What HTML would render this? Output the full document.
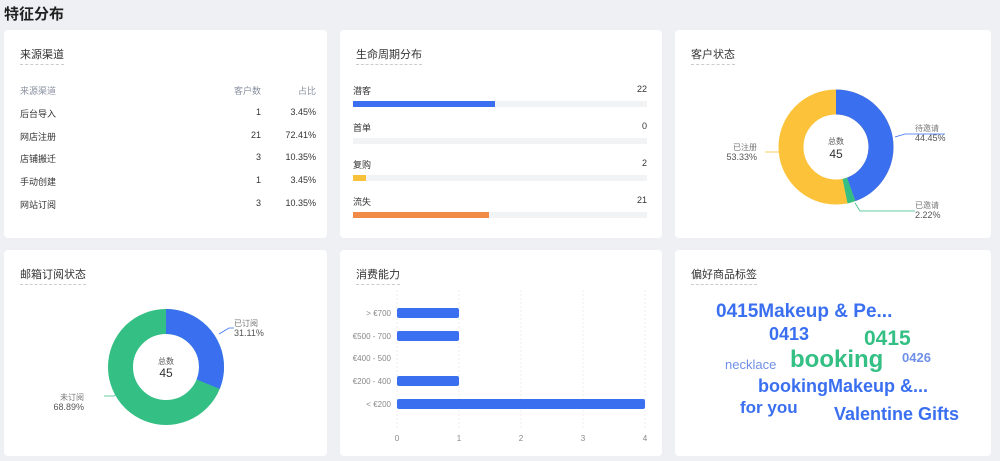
<!DOCTYPE html>
<html><head><meta charset="utf-8"><style>
body{margin:0;width:1000px;height:461px;background:#eef0f4;font-family:"Liberation Sans","Noto Sans CJK SC",sans-serif;position:relative;overflow:hidden;color:#333}
.h{position:absolute;left:4px;top:3px;font-size:15px;font-weight:bold;color:#222}
.c{position:absolute;background:#fff;border-radius:4px}
.t{position:absolute;left:16px;top:16px;font-size:11px;color:#333;border-bottom:1px dashed #ccc;padding-bottom:2px}
.a{position:absolute;font-size:9px;color:#333}
.g{color:#8a90a0}
.r{text-align:right}
</style></head><body>
<div class="h">特征分布</div>

<div class="c" style="left:4px;top:30px;width:323px;height:208px">
<div class="t">来源渠道</div>
<div class="a g" style="left:16px;top:54px">来源渠道</div><div class="a g r" style="left:200px;width:57px;top:54px">客户数</div><div class="a g r" style="left:260px;width:52px;top:54px">占比</div>
<div class="a" style="left:16px;top:77px">后台导入</div><div class="a r" style="left:200px;width:57px;top:77px">1</div><div class="a r" style="left:260px;width:52px;top:77px">3.45%</div>
<div class="a" style="left:16px;top:100px">网店注册</div><div class="a r" style="left:200px;width:57px;top:100px">21</div><div class="a r" style="left:260px;width:52px;top:100px">72.41%</div>
<div class="a" style="left:16px;top:122px">店铺搬迁</div><div class="a r" style="left:200px;width:57px;top:122px">3</div><div class="a r" style="left:260px;width:52px;top:122px">10.35%</div>
<div class="a" style="left:16px;top:145px">手动创建</div><div class="a r" style="left:200px;width:57px;top:145px">1</div><div class="a r" style="left:260px;width:52px;top:145px">3.45%</div>
<div class="a" style="left:16px;top:168px">网站订阅</div><div class="a r" style="left:200px;width:57px;top:168px">3</div><div class="a r" style="left:260px;width:52px;top:168px">10.35%</div>
</div>

<div class="c" style="left:340px;top:30px;width:322px;height:208px">
<div class="t">生命周期分布</div>
<div class="a" style="left:13px;top:54px">潜客</div><div class="a r" style="left:260px;width:47px;top:54px">22</div>
<div style="position:absolute;left:13px;top:71px;width:294px;height:6px;background:#f2f3f5"><div style="width:142px;height:6px;background:#3b6ef0"></div></div>
<div class="a" style="left:13px;top:91px">首单</div><div class="a r" style="left:260px;width:47px;top:91px">0</div>
<div style="position:absolute;left:13px;top:108px;width:294px;height:6px;background:#f2f3f5"></div>
<div class="a" style="left:13px;top:128px">复购</div><div class="a r" style="left:260px;width:47px;top:128px">2</div>
<div style="position:absolute;left:13px;top:145px;width:294px;height:6px;background:#f2f3f5"><div style="width:13px;height:6px;background:#f8c13a"></div></div>
<div class="a" style="left:13px;top:165px">流失</div><div class="a r" style="left:260px;width:47px;top:165px">21</div>
<div style="position:absolute;left:13px;top:182px;width:294px;height:6px;background:#f2f3f5"><div style="width:136px;height:6px;background:#f08a45"></div></div>
</div>

<div class="c" style="left:675px;top:30px;width:316px;height:208px">
<div class="t">客户状态</div>
<svg width="316" height="208" style="position:absolute;left:0;top:0">
<g transform="translate(161,117)">
<circle r="45" fill="none" stroke="#fbc23a" stroke-width="25"/>
<circle r="45" fill="none" stroke="#3a6ff0" stroke-width="25" stroke-dasharray="125.7 300" transform="rotate(-90)"/>
<circle r="45" fill="none" stroke="#34bf84" stroke-width="25" stroke-dasharray="6.3 300" stroke-dashoffset="-125.7" transform="rotate(-90)"/>
</g>
<polyline points="220,107 230,104 270,104" fill="none" stroke="#3a6ff0" stroke-width="0.8"/>
<polyline points="180,173 185,181 240,181" fill="none" stroke="#34bf84" stroke-width="0.8"/>
<polyline points="104,122 90,122" fill="none" stroke="#fbc23a" stroke-width="0.8"/>
<text x="161" y="114" font-size="8" text-anchor="middle" fill="#555">总数</text>
<text x="161" y="128" font-size="12" text-anchor="middle" fill="#333">45</text>
<text x="240" y="101" font-size="8" fill="#777">待邀请</text><text x="240" y="111" font-size="9" fill="#555">44.45%</text>
<text x="240" y="178" font-size="8" fill="#777">已邀请</text><text x="240" y="188" font-size="9" fill="#555">2.22%</text>
<text x="82" y="120" font-size="8" fill="#777" text-anchor="end">已注册</text><text x="82" y="130" font-size="9" fill="#555" text-anchor="end">53.33%</text>
</svg>
</div>

<div class="c" style="left:4px;top:250px;width:323px;height:206px">
<div class="t">邮箱订阅状态</div>
<svg width="323" height="206" style="position:absolute;left:0;top:0">
<g transform="translate(162,117)">
<circle r="45.5" fill="none" stroke="#34bf84" stroke-width="25"/>
<circle r="45.5" fill="none" stroke="#3a6ff0" stroke-width="25" stroke-dasharray="88.9 300" transform="rotate(-90)"/>
</g>
<polyline points="215,84 225,78 230,78" fill="none" stroke="#3a6ff0" stroke-width="0.8"/>
<polyline points="120,138 110,146 100,146" fill="none" stroke="#34bf84" stroke-width="0.8"/>
<text x="162" y="114" font-size="8" text-anchor="middle" fill="#555">总数</text>
<text x="162" y="127" font-size="12" text-anchor="middle" fill="#333">45</text>
<text x="230" y="76" font-size="8" fill="#777">已订阅</text><text x="230" y="86" font-size="9" fill="#555">31.11%</text>
<text x="80" y="150" font-size="8" fill="#777" text-anchor="end">未订阅</text><text x="80" y="160" font-size="9" fill="#555" text-anchor="end">68.89%</text>
</svg>
</div>

<div class="c" style="left:340px;top:250px;width:322px;height:206px">
<div class="t">消费能力</div>
<svg width="322" height="206" style="position:absolute;left:0;top:0" font-size="8" fill="#888">
<g stroke="#eee" stroke-dasharray="2 2"><line x1="57" y1="40" x2="57" y2="178"/><line x1="119" y1="40" x2="119" y2="178"/><line x1="181" y1="40" x2="181" y2="178"/><line x1="243" y1="40" x2="243" y2="178"/><line x1="305" y1="40" x2="305" y2="178"/></g>
<g fill="#3a6ff0"><rect x="57" y="58" width="62" height="10" rx="2"/><rect x="57" y="81" width="62" height="10" rx="2"/><rect x="57" y="126" width="62" height="10" rx="2"/><rect x="57" y="149" width="248" height="10" rx="2"/></g>
<g text-anchor="end"><text x="51" y="66">&gt; €700</text><text x="51" y="89">€500 - 700</text><text x="51" y="111">€400 - 500</text><text x="51" y="134">€200 - 400</text><text x="51" y="157">&lt; €200</text></g>
<g text-anchor="middle"><text x="57" y="191">0</text><text x="119" y="191">1</text><text x="181" y="191">2</text><text x="243" y="191">3</text><text x="305" y="191">4</text></g>
</svg>
</div>

<div class="c" style="left:675px;top:250px;width:316px;height:206px">
<div class="t">偏好商品标签</div>
<svg width="316" height="206" style="position:absolute;left:0;top:0" font-family="Liberation Sans,sans-serif" font-weight="bold">
<text x="41" y="67" font-size="19" fill="#3a6ff0">0415Makeup &amp; Pe...</text>
<text x="94" y="90" font-size="18" fill="#3a6ff0">0413</text>
<text x="189" y="95" font-size="21" fill="#34bf84">0415</text>
<text x="115" y="117" font-size="24" fill="#34bf84">booking</text>
<text x="50" y="119" font-size="13" fill="#6f8fe8" font-weight="normal">necklace</text>
<text x="227" y="112" font-size="13" fill="#6f8fe8">0426</text>
<text x="83" y="142" font-size="18" fill="#3a6ff0">bookingMakeup &amp;...</text>
<text x="65" y="163" font-size="17" fill="#3a6ff0">for you</text>
<text x="159" y="170" font-size="18" fill="#3a6ff0">Valentine Gifts</text>
</svg>
</div>
</body></html>
